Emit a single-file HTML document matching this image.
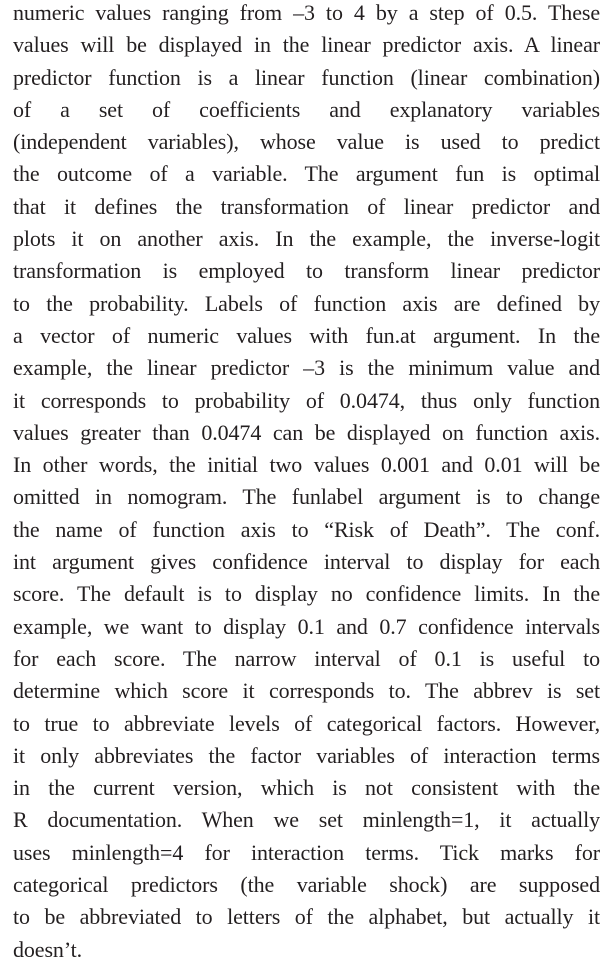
<!DOCTYPE html>
<html><head><meta charset="utf-8"><style>
html,body{margin:0;padding:0;background:#fff;width:611px;height:968px;overflow:hidden}
.t{position:absolute;left:13px;top:-3px;width:587px;font-family:"Liberation Serif",serif;font-size:22px;letter-spacing:-0.1px;line-height:32.3px;color:#231f20}
.t div{text-align:justify;text-align-last:justify;white-space:nowrap;overflow:hidden}
.t div.l{text-align-last:left}
</style></head><body><div class="t">
<div>numeric values ranging from –3 to 4 by a step of 0.5. These</div>
<div>values will be displayed in the linear predictor axis. A linear</div>
<div>predictor function is a linear function (linear combination)</div>
<div>of a set of coefficients and explanatory variables</div>
<div>(independent variables), whose value is used to predict</div>
<div>the outcome of a variable. The argument fun is optimal</div>
<div>that it defines the transformation of linear predictor and</div>
<div>plots it on another axis. In the example, the inverse-logit</div>
<div>transformation is employed to transform linear predictor</div>
<div>to the probability. Labels of function axis are defined by</div>
<div>a vector of numeric values with fun.at argument. In the</div>
<div>example, the linear predictor –3 is the minimum value and</div>
<div>it corresponds to probability of 0.0474, thus only function</div>
<div>values greater than 0.0474 can be displayed on function axis.</div>
<div>In other words, the initial two values 0.001 and 0.01 will be</div>
<div>omitted in nomogram. The funlabel argument is to change</div>
<div>the name of function axis to “Risk of Death”. The conf.</div>
<div>int argument gives confidence interval to display for each</div>
<div>score. The default is to display no confidence limits. In the</div>
<div>example, we want to display 0.1 and 0.7 confidence intervals</div>
<div>for each score. The narrow interval of 0.1 is useful to</div>
<div>determine which score it corresponds to. The abbrev is set</div>
<div>to true to abbreviate levels of categorical factors. However,</div>
<div>it only abbreviates the factor variables of interaction terms</div>
<div>in the current version, which is not consistent with the</div>
<div>R documentation. When we set minlength=1, it actually</div>
<div>uses minlength=4 for interaction terms. Tick marks for</div>
<div>categorical predictors (the variable shock) are supposed</div>
<div>to be abbreviated to letters of the alphabet, but actually it</div>
<div class="l">doesn’t.</div>
</div></body></html>
